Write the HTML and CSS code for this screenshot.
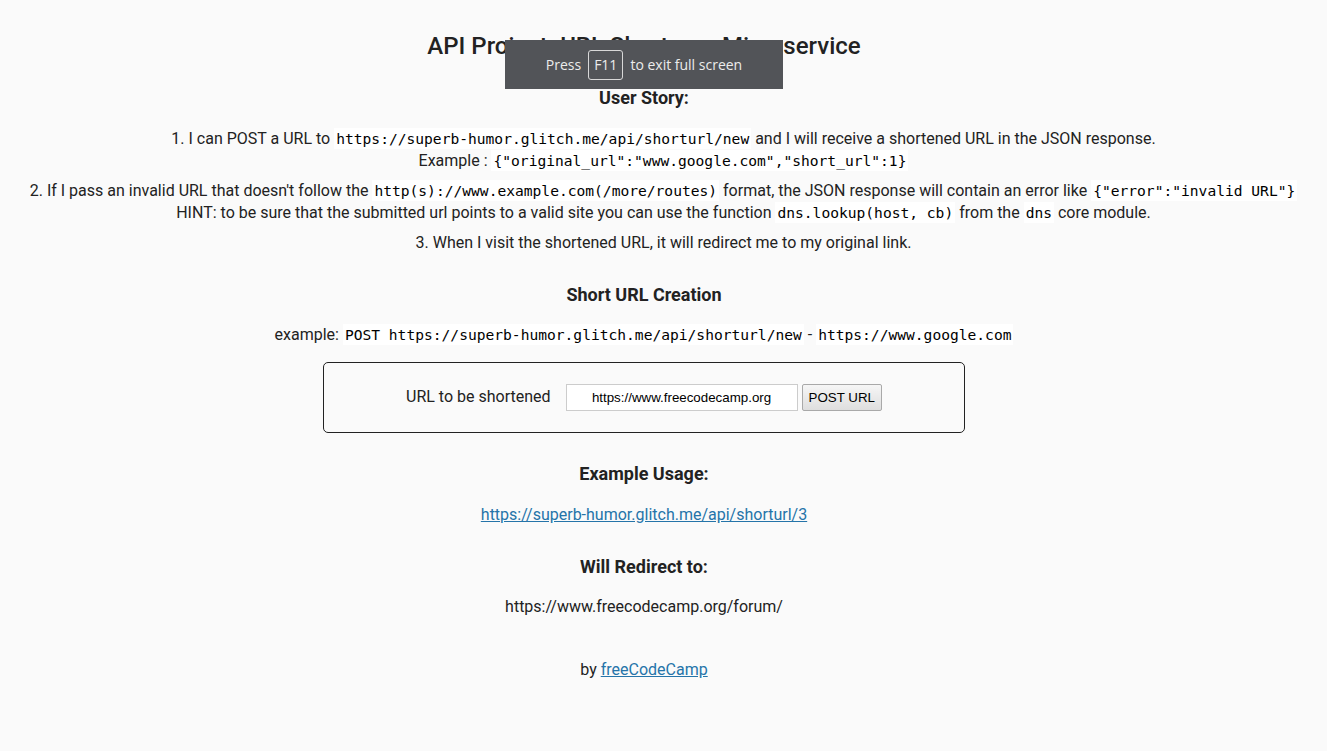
FILE: index.html
```html
<!DOCTYPE html>
<html>
<head>
<meta charset="utf-8">
<title>URL Shortener Microservice | freeCodeCamp.org</title>
<link rel="stylesheet" href="styles.css">
</head>
<body>
<div class="container">
  <h1 class="title">API Project: URL Shortener Microservice</h1>
  <h3 class="sub">User Story:</h3>
  <ul class="stories">
    <li>1. I can POST a URL to <code>https://superb-humor.glitch.me/api/shorturl/new</code> and I will receive a shortened URL in the JSON response.<br>Example : <code>{"original_url":"www.google.com","short_url":1}</code></li>
    <li>2. If I pass an invalid URL that doesn't follow the <code>http(s)://www.example.com(/more/routes)</code> format, the JSON response will contain an error like <code>{"error":"invalid URL"}</code><br>HINT: to be sure that the submitted url points to a valid site you can use the function <code>dns.lookup(host, cb)</code> from the <code>dns</code> core module.</li>
    <li>3. When I visit the shortened URL, it will redirect me to my original link.</li>
  </ul>
  <h3 class="sub sub-create">Short URL Creation</h3>
  <p class="line">example: <code>POST https://superb-humor.glitch.me/api/shorturl/new</code> - <code>https://www.google.com</code></p>
  <form class="url-form" action="#">
    <label class="url-label" for="url_input">URL to be shortened</label>
    <input class="url-input" id="url_input" type="text" value="https://www.freecodecamp.org">
    <button class="url-btn" type="button">POST URL</button>
  </form>
  <h3 class="sub sub-usage">Example Usage:</h3>
  <p class="line line-link"><a href="#">https://superb-humor.glitch.me/api/shorturl/3</a></p>
  <h3 class="sub sub-redirect">Will Redirect to:</h3>
  <p class="line">https://www.freecodecamp.org/forum/</p>
  <p class="line footer">by <a href="#">freeCodeCamp</a></p>
</div>
<div class="fs-toast">Press <span class="fs-key">F11</span> to exit full screen</div>
</body>
</html>
```
FILE: styles.css
```css
html, body {
  margin: 0;
  padding: 0;
}
body {
  background-color: #fafafa;
  color: #222;
  font-family: Roboto, "Liberation Sans", sans-serif;
  font-size: 16px;
  text-align: center;
}
.container {
  margin-right: 39px;
  padding-top: 32px;
}
.title {
  font-size: 24px;
  font-weight: 500;
  line-height: 28px;
  margin: 0 0 27px;
}
.sub {
  font-size: 18px;
  font-weight: 700;
  line-height: 22px;
  margin: 0;
}
.stories {
  list-style: none;
  margin: 19px -39px 0 0;
  padding: 0;
}
.stories li {
  line-height: 22px;
  margin-bottom: 8px;
}
code {
  font-family: "DejaVu Sans Mono", monospace;
  font-size: 14.6px;
  padding: 2px;
  color: #000;
  background-color: #fff;
}
.sub-create {
  margin-top: 30px;
}
.line {
  line-height: 22px;
  margin: 18px 0 0;
}
.url-form {
  box-sizing: border-box;
  width: 642px;
  margin: 16px auto 0;
  border: 1px solid #222;
  border-radius: 5px;
  padding: 21px 0;
  display: flex;
  justify-content: center;
  align-items: center;
}
.url-label {
  margin-right: 15px;
  position: relative;
  top: -1px;
}
.url-input {
  font-family: "Liberation Sans", Arial, sans-serif;
  font-size: 13.33px;
  line-height: 15px;
  color: #000;
  width: 220px;
  padding: 5px;
  border: 1px solid #ccc;
  margin: 0 4px 0 0;
  text-align: center;
  background: #fff;
}
.url-btn {
  font-family: "Liberation Sans", Arial, sans-serif;
  font-size: 13.33px;
  line-height: 15px;
  color: #000;
  padding: 5px 6px;
  border: 1px solid #a9a9a9;
  border-radius: 2px;
  background: linear-gradient(#f6f6f6, #dedede);
  margin: 0;
}
.sub-usage {
  margin-top: 30px;
}
.line-link {
  margin-top: 19px;
}
.sub-redirect {
  margin-top: 30px;
}
.footer {
  margin-top: 41px;
}
a {
  color: #2574a9;
}
.fs-toast {
  position: absolute;
  left: 505px;
  top: 40px;
  width: 278px;
  height: 49px;
  box-sizing: border-box;
  background: #525458;
  color: #ececec;
  font-family: "Open Sans", "Noto Sans", sans-serif;
  font-size: 14px;
  display: flex;
  align-items: center;
  justify-content: center;
  gap: 7px;
}
.fs-key {
  border: 1px solid #d8d8d8;
  border-radius: 3px;
  padding: 5px 5px;
  line-height: 18px;
}
```
